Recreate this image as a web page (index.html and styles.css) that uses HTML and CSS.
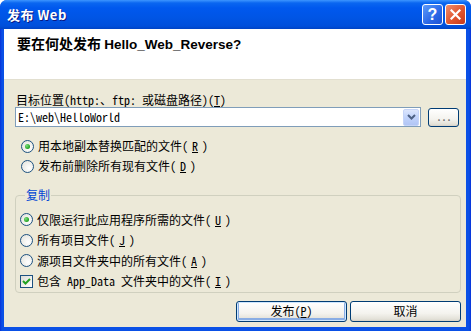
FILE: index.html
```html
<!DOCTYPE html>
<html lang="zh-CN">
<head>
    <meta charset="UTF-8">
    <title>发布 Web</title>
    <link rel="stylesheet" href="styles.css">
</head>
<body>
    <div class="window">
        <div class="titlebar">
            <span class="title">发布 Web</span>
            <div class="caption-btns">
                <span class="cap help">?</span>
                <span class="cap close">
                    <svg width="11" height="11" viewBox="0 0 11 11"><path d="M1.5 1.5 L9.5 9.5 M9.5 1.5 L1.5 9.5" stroke="#fff" stroke-width="2.2" stroke-linecap="square"/></svg>
                </span>
            </div>
        </div>
        <div class="frame">
            <div class="header">要在何处发布 <span class="latin">Hello_Web_Reverse?</span></div>
            <div class="content">
                <div class="field-label">目标位置(http:、ftp: 或磁盘路径)(<u>T</u>)</div>
                <div class="combo-row">
                    <div class="combo">
                        <span class="combo-text">E:\web\HelloWorld</span>
                        <span class="drop">
                            <svg width="9" height="6" viewBox="0 0 9 6"><path d="M1 1 L4.5 4.5 L8 1" fill="none" stroke="#4D6185" stroke-width="2"/></svg>
                        </span>
                    </div>
                    <span class="btn browse">...</span>
                </div>

                <div class="options top-options">
                    <div class="opt"><span class="radio checked"></span>用本地副本替换匹配的文件(<u>R</u>)</div>
                    <div class="opt"><span class="radio"></span>发布前删除所有现有文件(<u>D</u>)</div>
                </div>

                <fieldset class="group">
                    <legend>复制</legend>
                    <div class="opt"><span class="radio checked"></span>仅限运行此应用程序所需的文件(<u>U</u>)</div>
                    <div class="opt"><span class="radio"></span>所有项目文件(<u>J</u>)</div>
                    <div class="opt"><span class="radio"></span>源项目文件夹中的所有文件(<u>A</u>)</div>
                    <div class="opt">
                        <span class="check">
                            <svg width="11" height="11" viewBox="0 0 11 11"><path d="M2 5 L4.5 7.5 L9 3" fill="none" stroke="#21A121" stroke-width="2"/></svg>
                        </span>包含 App_Data 文件夹中的文件(<u>I</u>)
                    </div>
                </fieldset>

                <div class="actions">
                    <span class="btn default">发布(<u>P</u>)</span>
                    <span class="btn">取消</span>
                </div>
            </div>
        </div>
    </div>
</body>
</html>
```

FILE: styles.css
```css
* {
    box-sizing: border-box;
}

html, body {
    margin: 0;
    padding: 0;
    overflow: hidden;
}

body {
    font-family: "Noto Sans Mono CJK SC", "Noto Sans CJK SC", monospace;
    font-size: 12px;
    line-height: 14px;
    color: #000;
}

.window {
    width: 471px;
    height: 331px;
    display: flex;
    flex-direction: column;
    background: linear-gradient(to right, #0831D9, #0A50E6 2px, #0A50E6 calc(100% - 2px), #0831D9);
    border-radius: 7px 7px 0 0;
    overflow: hidden;
}

/* title bar */
.titlebar {
    height: 29px;
    flex: none;
    display: flex;
    align-items: center;
    justify-content: space-between;
    padding: 0 5px 0 7px;
    background: linear-gradient(#3D95FF 0, #0A66F0 3px, #0058EE 8px, #0055E5 60%, #004FDB 90%, #0043C4 100%);
}

.title {
    font-family: "Noto Sans CJK SC", sans-serif;
    font-weight: bold;
    font-size: 13px;
    color: #fff;
    text-shadow: 1px 1px #0A1883;
    letter-spacing: 0.5px;
}

.caption-btns {
    display: flex;
    gap: 2px;
}

.cap {
    width: 21px;
    height: 21px;
    border: 1px solid #fff;
    border-radius: 3px;
    display: flex;
    align-items: center;
    justify-content: center;
    color: #fff;
}

.help {
    background: linear-gradient(135deg, #5D9BFA, #2A67E6 60%, #1C52D4);
    font-family: "Liberation Sans", sans-serif;
    font-weight: bold;
    font-size: 16px;
}

.close {
    background: linear-gradient(135deg, #F08E6E, #E0552E 55%, #C6391A);
}

/* client area */
.frame {
    flex: 1;
    margin: 0 5px 4px 4px;
    background: #ECE9D8;
    display: flex;
    flex-direction: column;
}

.header {
    height: 51px;
    background: #fff;
    border-bottom: 1px solid #E2DFD0;
    padding: 6px 0 0 13px;
    font-family: "Noto Sans CJK SC", sans-serif;
    font-weight: bold;
    font-size: 14px;
    line-height: 16px;
}

.header .latin {
    font-family: "Liberation Sans", sans-serif;
    font-size: 13.5px;
}

.content {
    padding: 13px 5px 0 11px;
}

.field-label {
    padding-left: 1px;
}

.combo-row {
    display: flex;
    align-items: center;
    gap: 7px;
}

.combo {
    width: 406px;
    height: 20px;
    border: 1px solid #7F9DB9;
    background: #fff;
    display: flex;
    align-items: center;
    justify-content: space-between;
    padding: 0 1px 0 2px;
}

.drop {
    width: 16px;
    height: 17px;
    border-radius: 2px;
    background: linear-gradient(#DCE6FD, #C1D3FB 50%, #B1C5F5);
    border: 1px solid #C5D4F8;
    display: flex;
    align-items: center;
    justify-content: center;
}

.btn {
    display: flex;
    align-items: center;
    justify-content: center;
    border: 1px solid #003C74;
    border-radius: 3px;
    background: linear-gradient(#FFFFFF, #F4F3EE 60%, #E3E1D8 90%, #D6D0C5);
}

.browse {
    width: 31px;
    height: 19px;
    color: #6B6B6B;
    letter-spacing: -1px;
    padding-bottom: 3px;
}

.options {
    display: flex;
    flex-direction: column;
}

.top-options {
    margin-top: 9px;
    padding-left: 6px;
}

.opt {
    height: 20.5px;
    display: flex;
    align-items: center;
    gap: 4px;
}

.top-options .opt {
    height: 20px;
}

.radio {
    width: 13px;
    height: 13px;
    border-radius: 50%;
    border: 1px solid #1C5180;
    background: radial-gradient(circle at 65% 65%, #FFFFFF, #E6E6E0 80%, #DCDCD5);
    display: flex;
    align-items: center;
    justify-content: center;
}

.radio.checked::after {
    content: "";
    width: 5px;
    height: 5px;
    border-radius: 50%;
    background: radial-gradient(circle at 35% 35%, #7DE07D, #21A121 70%);
}

.check {
    width: 13px;
    height: 13px;
    border: 1px solid #1C5180;
    background: linear-gradient(135deg, #DCDCD5, #FFFFFF);
    display: flex;
    align-items: center;
    justify-content: center;
}

.group {
    margin: 12px 0 0;
    padding: 7.5px 4px 0;
    border: 1px solid #D0D0BF;
    border-radius: 4px;
    min-width: 0;
}

.group legend {
    padding: 0 1px;
    margin-left: 5px;
    color: #0046D5;
}

.actions {
    margin-top: 8px;
    display: flex;
    justify-content: flex-end;
    gap: 3px;
}

.actions .btn {
    width: 111px;
    height: 21px;
}

.actions .default {
    box-shadow: inset 0 0 0 1px #CEE7FF, inset 0 -1px 0 2px #89ADE4;
}
```
